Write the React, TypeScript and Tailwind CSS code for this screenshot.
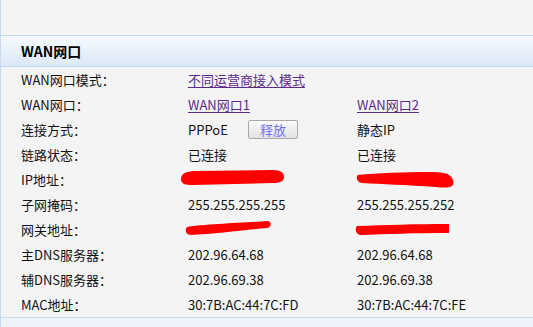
import React from 'react';

const font = { fontFamily: '"Noto Sans CJK SC", "Noto Sans", sans-serif' };

type Row = {
  label: string;
  a: React.ReactNode;
  b: React.ReactNode;
};

const Link = ({ children }: { children: React.ReactNode }) => (
  <span className="text-[#5b2a8c] underline underline-offset-2 decoration-[#5b2a8c]">{children}</span>
);

const Scribble = ({ d, className }: { d: string; className: string }) => (
  <svg className={`pointer-events-none absolute max-w-none ${className}`} viewBox="0 0 110 22" width="110" height="22">
    <path d={d} fill="#ff0000" />
  </svg>
);

const rows: Row[] = [
  { label: 'WAN网口模式：', a: <Link>不同运营商接入模式</Link>, b: null },
  { label: 'WAN网口：', a: <Link>WAN网口1</Link>, b: <Link>WAN网口2</Link> },
  {
    label: '连接方式：',
    a: (
      <div className="flex items-center">
        <span className="w-[60px]">PPPoE</span>
        <button className="h-[19px] w-[50px] rounded-[2px] border border-[#a9a9a9] bg-gradient-to-b from-[#fbfbfb] to-[#e2e2e2] text-[13px] leading-none text-[#7373ee]">
          释放
        </button>
      </div>
    ),
    b: '静态IP',
  },
  { label: '链路状态：', a: '已连接', b: '已连接' },
  {
    label: 'IP地址：',
    a: (
      <Scribble
        className="-left-[9px] top-[1px]"
        d="M2 11 C2 5 8 3 18 3 L94 2 C102 2 105 5 105 9 C105 13 101 15 94 15 L14 17 C6 17 2 16 2 11 Z"
      />
    ),
    b: (
      <Scribble
        className="-left-[1px] top-[2px]"
        d="M2 6 C20 4 50 3 72 3 C86 3 92 4 94 7 C97 9 98 13 97 16 C95 19 88 19 80 18 C50 16 25 15 6 14 C0 13 0 7 2 6 Z"
      />
    ),
  },
  { label: '子网掩码：', a: '255.255.255.255', b: '255.255.255.252' },
  {
    label: '网关地址：',
    a: (
      <Scribble
        className="-left-[3px] top-[2px]"
        d="M2 8 C20 5 60 4 82 2 C87 2 87 8 82 9 C60 11 30 15 6 16 C0 16 0 10 2 8 Z"
      />
    ),
    b: (
      <Scribble
        className="-left-[2px] top-[4px]"
        d="M2 5 C30 4 60 3 94 3 L94 12 C60 12 30 13 5 14 C0 13 0 6 2 5 Z"
      />
    ),
  },
  { label: '主DNS服务器：', a: '202.96.64.68', b: '202.96.64.68' },
  { label: '辅DNS服务器：', a: '202.96.69.38', b: '202.96.69.38' },
  { label: 'MAC地址：', a: '30:7B:AC:44:7C:FD', b: '30:7B:AC:44:7C:FE' },
];

export default function App() {
  return (
    <div
      style={font}
      className="flex h-[327px] w-[533px] flex-col overflow-hidden border-l border-[#c6dbef] bg-[#f4f4f4] text-[13px] text-[#111]"
    >
      <div className="h-[35px] shrink-0" />
      <div className="flex h-[32px] shrink-0 items-center border-y border-[#c3d8ee] bg-gradient-to-b from-[#f5f9fe] to-[#dbe8f7] pl-[20px] text-[14px] font-bold text-black">
        WAN网口
      </div>
      <div className="flex flex-col">
        {rows.map((r) => (
          <div key={r.label} className="flex h-[25px] items-center">
            <div className="w-[187px] shrink-0 pl-[20px]">{r.label}</div>
            <div className="relative h-full w-[169px] shrink-0">
              <div className="flex h-full items-center">{r.a}</div>
            </div>
            <div className="relative h-full flex-1">
              <div className="flex h-full items-center">{r.b}</div>
            </div>
          </div>
        ))}
      </div>
      <div className="flex-1 border-t border-[#c6dbef] bg-[#eef3fa]" />
    </div>
  );
}
